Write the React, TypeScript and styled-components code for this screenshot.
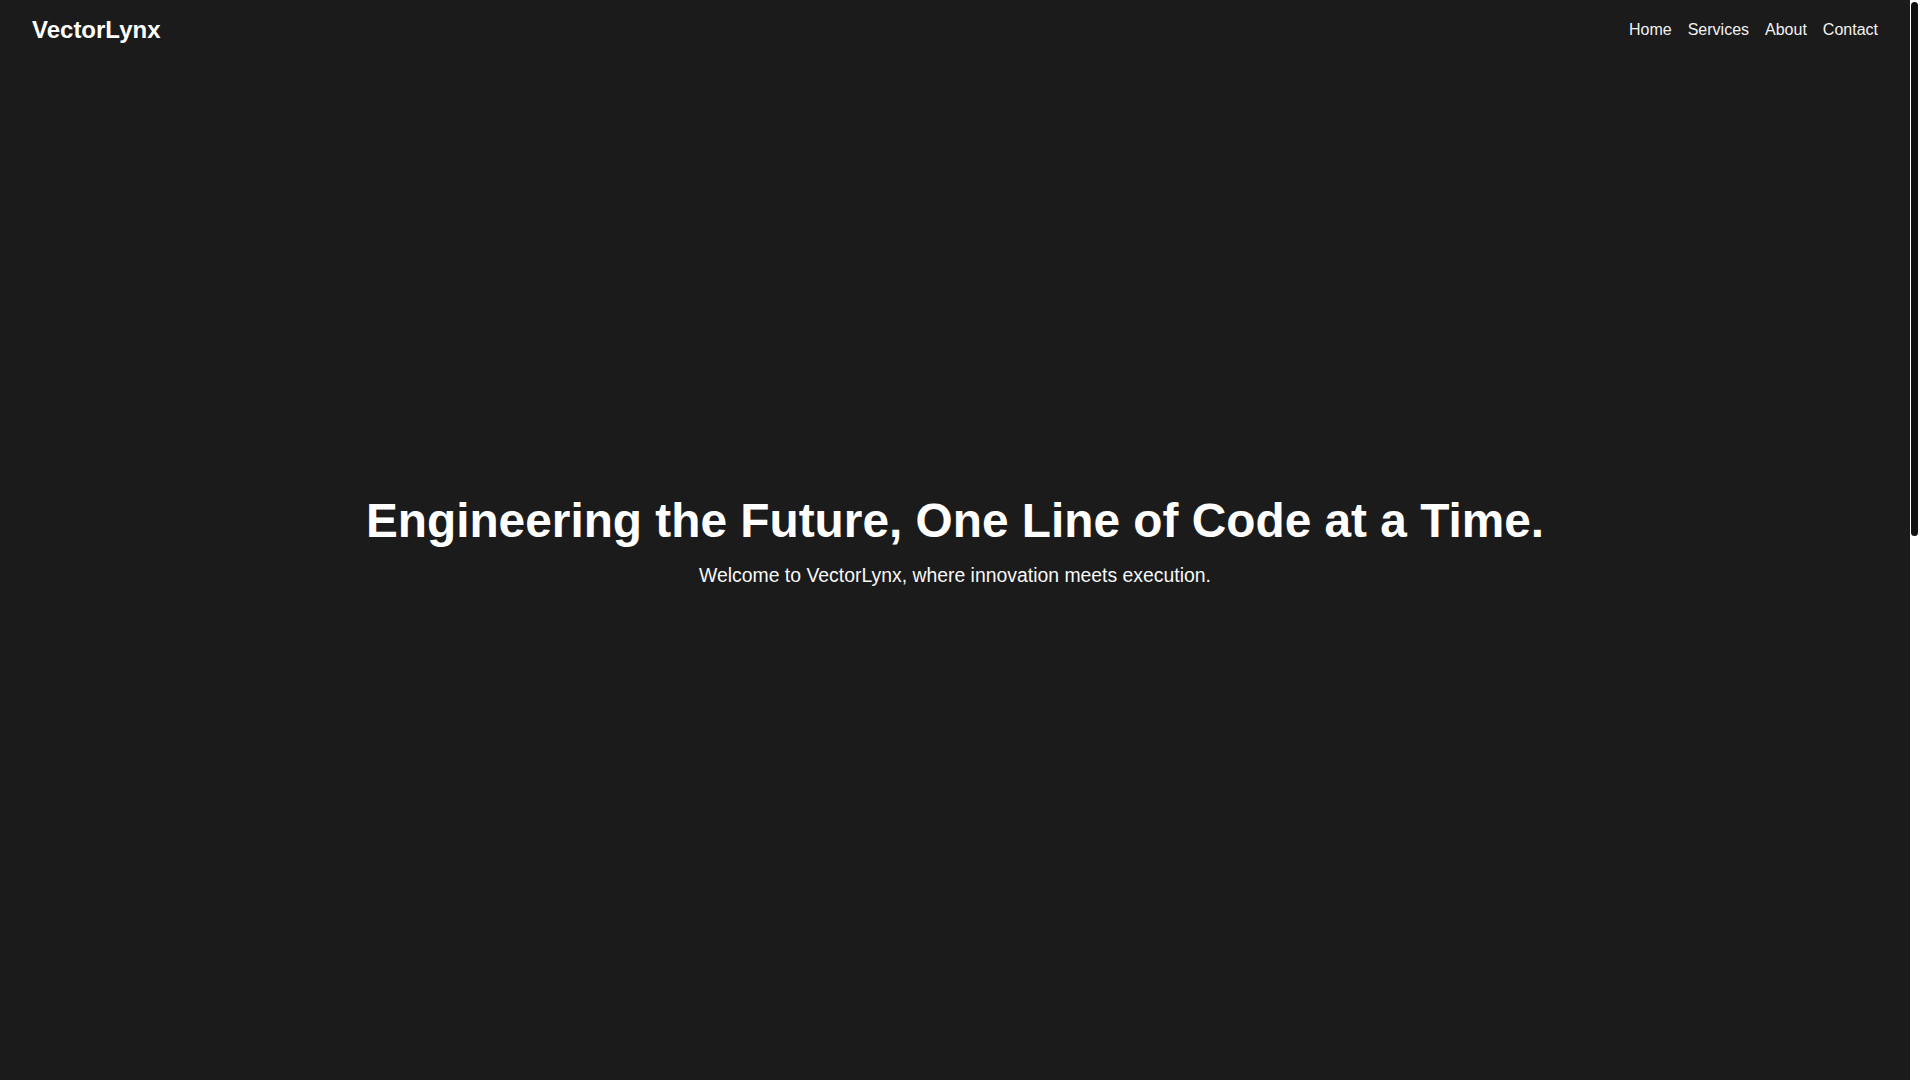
import React from "react";
import styled, { createGlobalStyle } from "styled-components";

const GlobalStyle = createGlobalStyle`
  *, *::before, *::after { box-sizing: border-box; }
  html, body {
    margin: 0;
    padding: 0;
    height: 100%;
    overflow: hidden;
    background: #1b1b1b;
    color: #ffffff;
    font-family: "Liberation Sans", Arial, Helvetica, sans-serif;
  }
`;

const Layout = styled.div`
  display: flex;
  height: 100vh;
  background: #1b1b1b;
`;

const Main = styled.div`
  position: relative;
  flex: 1;
  min-width: 0;
  height: 100vh;
  overflow-y: auto;
  scrollbar-width: none;
  &::-webkit-scrollbar { display: none; }
`;

const ScrollTrack = styled.div`
  width: 10px;
  flex: 0 0 10px;
  height: 100vh;
  background: #ffffff;
  padding: 2px 2px 0 1px;
`;

const ScrollThumb = styled.div<{ $size: number }>`
  width: 100%;
  height: ${(p) => p.$size}px;
  background: #111111;
  border-radius: 4px;
`;

const Header = styled.header`
  position: absolute;
  top: 0;
  left: 0;
  right: 0;
  z-index: 10;
  display: flex;
  align-items: center;
  justify-content: space-between;
  padding: 16px 32px;
`;

const Logo = styled.div`
  font-size: 24px;
  font-weight: 700;
  color: #ffffff;
`;

const Nav = styled.nav`
  display: flex;
  gap: 16px;
`;

const NavLink = styled.a`
  font-size: 16px;
  color: #f2f2f2;
  text-decoration: none;
`;

const Hero = styled.section`
  min-height: 100vh;
  display: flex;
  flex-direction: column;
  align-items: center;
  justify-content: center;
  text-align: center;
  padding: 0 32px;
`;

const Title = styled.h1`
  margin: 0 0 16px;
  font-size: 47.8px;
  font-weight: 700;
  color: #ffffff;
`;

const Subtitle = styled.p`
  margin: 0;
  font-size: 19.4px;
  color: #f7f7f7;
`;

const Section = styled.section<{ $minHeight: number }>`
  min-height: ${(p) => p.$minHeight}px;
  padding: 64px 32px;
  display: flex;
  flex-direction: column;
  align-items: center;
  gap: 32px;
`;

const SectionTitle = styled.h2`
  margin: 0;
  font-size: 32px;
  font-weight: 700;
  color: #ffffff;
`;

const CardGrid = styled.div`
  display: grid;
  grid-template-columns: repeat(3, 320px);
  gap: 32px;
`;

const Card = styled.div`
  background: #242424;
  border-radius: 8px;
  padding: 24px;
  text-align: left;
`;

const CardTitle = styled.h3`
  margin: 0 0 8px;
  font-size: 20px;
`;

const Text = styled.p`
  margin: 0;
  font-size: 16px;
  line-height: 1.5;
  color: #cccccc;
  max-width: 720px;
  text-align: center;
`;

const CardText = styled(Text)`
  text-align: left;
`;

const Footer = styled.footer`
  height: 70px;
  padding: 24px 32px;
  text-align: center;
  font-size: 14px;
  color: #999999;
`;

const services = [
  { title: "Software Development", text: "Custom solutions built for scale and reliability." },
  { title: "Cloud Engineering", text: "Modern infrastructure designed for performance." },
  { title: "Consulting", text: "Expert guidance from strategy to delivery." },
];

export default function App() {
  const viewport = 1080;
  const contentHeight = 2184;
  const thumb = Math.round((viewport * viewport) / contentHeight);
  return (
    <>
      <GlobalStyle />
      <Layout>
        <Main>
          <Header>
            <Logo>VectorLynx</Logo>
            <Nav>
              <NavLink href="#home">Home</NavLink>
              <NavLink href="#services">Services</NavLink>
              <NavLink href="#about">About</NavLink>
              <NavLink href="#contact">Contact</NavLink>
            </Nav>
          </Header>
          <main>
            <Hero id="home">
              <Title>Engineering the Future, One Line of Code at a Time.</Title>
              <Subtitle>Welcome to VectorLynx, where innovation meets execution.</Subtitle>
            </Hero>
            <Section id="services" $minHeight={440}>
              <SectionTitle>Services</SectionTitle>
              <CardGrid>
                {services.map((s) => (
                  <Card key={s.title}>
                    <CardTitle>{s.title}</CardTitle>
                    <CardText>{s.text}</CardText>
                  </Card>
                ))}
              </CardGrid>
            </Section>
            <Section id="about" $minHeight={340}>
              <SectionTitle>About</SectionTitle>
              <Text>
                VectorLynx is a team of engineers dedicated to building software that
                moves businesses forward.
              </Text>
            </Section>
            <Section id="contact" $minHeight={254}>
              <SectionTitle>Contact</SectionTitle>
              <Text>hello@vectorlynx.com</Text>
            </Section>
          </main>
          <Footer>© VectorLynx. All rights reserved.</Footer>
        </Main>
        <ScrollTrack aria-hidden="true">
          <ScrollThumb $size={thumb} />
        </ScrollTrack>
      </Layout>
    </>
  );
}
